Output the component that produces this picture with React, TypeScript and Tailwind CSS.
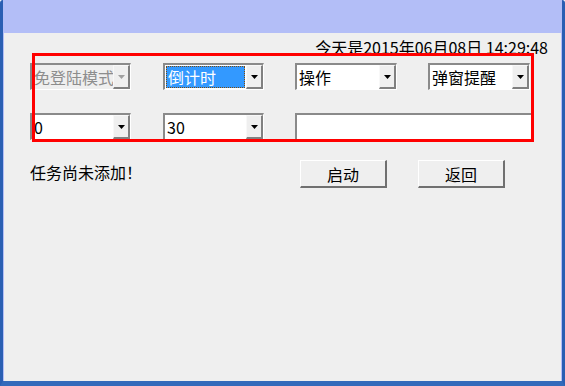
import React from "react";

const font = { fontFamily: '"Noto Sans CJK SC", "Noto Sans", sans-serif' };

const Arrow = ({ disabled }: { disabled?: boolean }) => (
  <svg width="7" height="4" viewBox="0 0 7 4">
    <polygon points="0,0 7,0 3.5,4" fill={disabled ? "#a0a0a0" : "#000"} />
  </svg>
);

const Combo = ({
  value,
  width,
  disabled,
  selected,
}: {
  value: string;
  width: string;
  disabled?: boolean;
  selected?: boolean;
}) => (
  <div
    className={`${width} h-[27px] flex border-t-2 border-l-2 border-b border-r border-t-[#8a8a8a] border-l-[#8a8a8a] border-b-white border-r-white ${
      disabled ? "bg-[#efefef]" : "bg-white"
    }`}
  >
    <div className="flex-1 min-w-0 flex items-center p-[1px]">
      {selected ? (
        <div className="h-full w-full flex items-center bg-[#3399ff] border border-dotted border-[#7a4a10] text-white pl-[1px] leading-[16px]">
          {value}
        </div>
      ) : (
        <span
          className={`pl-[1px] leading-[16px] whitespace-nowrap ${
            disabled ? "text-[#8d8d8d]" : "text-black"
          }`}
        >
          {value}
        </span>
      )}
    </div>
    <div className="w-[17px] flex items-center justify-center bg-[#efefef] border-t border-l border-t-[#f8f8f8] border-l-[#f8f8f8] border-b-2 border-r-2 border-b-[#808080] border-r-[#808080]">
      <Arrow disabled={disabled} />
    </div>
  </div>
);

const Button = ({ label }: { label: string }) => (
  <button className="w-[87px] h-[28px] bg-[#efefef] border-t border-l border-t-white border-l-white border-b-2 border-r-2 border-b-[#707070] border-r-[#707070] text-black text-[16px] leading-[16px] flex items-center justify-center">
    {label}
  </button>
);

export default function App() {
  return (
    <div
      className="relative w-[565px] h-[386px] bg-[#b3bef7] border-l-[3px] border-r-[3px] border-b-[5px] border-l-[#2a5fb3] border-r-[#2a5fb3] border-b-[#336abb] rounded-t-[3px] flex flex-col text-[16px]"
      style={font}
    >
      {/* title bar */}
      <div className="h-[33px] shrink-0" />

      {/* client area */}
      <div className="flex-1 mx-[1px] bg-[#efefef] flex flex-col">
        <div className="mt-[6px] pr-[13px] text-right leading-[16px] text-black">
          今天是2015年06月08日 14:29:48
        </div>

        <div className="mt-[8px] ml-[26px] flex">
          <Combo value="免登陆模式" width="w-[101px]" disabled />
          <div className="ml-[32px]">
            <Combo value="倒计时" width="w-[101px]" selected />
          </div>
          <div className="ml-[31px]">
            <Combo value="操作" width="w-[102px]" />
          </div>
          <div className="ml-[31px]">
            <Combo value="弹窗提醒" width="w-[102px]" />
          </div>
        </div>

        <div className="mt-[23px] ml-[26px] flex">
          <Combo value="0" width="w-[101px]" />
          <div className="ml-[32px]">
            <Combo value="30" width="w-[101px]" />
          </div>
          <div className="ml-[31px] w-[237px] h-[28px] bg-white border-t-2 border-l-2 border-b border-r border-t-[#8a8a8a] border-l-[#8a8a8a] border-b-white border-r-white" />
        </div>

        <div className="mt-[19px] ml-[26px] flex items-start">
          <div className="w-[270px] mt-[4px] leading-[16px] text-black">任务尚未添加！</div>
          <Button label="启动" />
          <div className="ml-[31px]">
            <Button label="返回" />
          </div>
        </div>
      </div>

      {/* red annotation box */}
      <div className="absolute left-[29px] top-[53px] w-[502px] h-[89px] border-[3px] border-[#ff0000] pointer-events-none" />
    </div>
  );
}
